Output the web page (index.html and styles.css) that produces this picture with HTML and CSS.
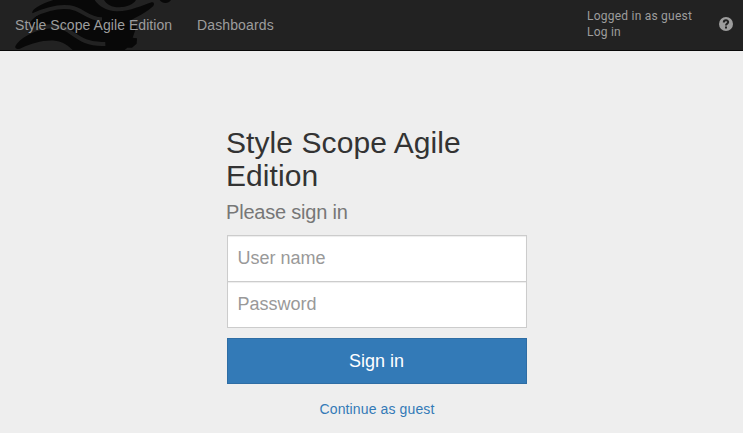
FILE: index.html
```html
<!DOCTYPE html>
<html lang="en">
<head>
<meta charset="utf-8">
<title>Style Scope Agile Edition</title>
<link rel="stylesheet" href="styles.css">
</head>
<body>
<header class="navbar">
  <svg class="navbar-art" width="190" height="50" viewBox="0 0 570 150" aria-hidden="true">
    <path class="ink" d="M97 35C103 22 130 10 160 0H284C296 18 320 33 350 34C390 35 425 16 455 7C462 6 464 12 460 18C440 37 410 51 386 64L410 78L398 113L411 115L410 131L396 143H382L374 150H218C205 138 190 124 165 122C130 119 95 130 66 143C56 149 44 148 46 139C55 122 72 112 90 102L112 78C100 80 84 80 90 68C98 55 115 44 132 34C120 35 110 39 101 40C97 40 96 38 97 35Z"/>
    <path class="ink" d="M312 0H408C399 14 382 21 357 22C335 22 320 13 312 0ZM479 0H513C506 12 486 11 479 0Z"/>
    <path class="wave" d="M98 46C137 28 174 17 209 22C250 28 259 56 306 58M84 97C128 77 173 71 205 92C237 114 260 135 316 132"/>
  </svg>
  <a class="brand">Style Scope Agile Edition</a>
  <nav><a>Dashboards</a></nav>
  <div class="account"><span>Logged in as guest</span><a>Log in</a></div>
  <svg class="help" width="14" height="14" viewBox="0 0 14 14" role="img" aria-label="Help">
    <circle cx="7" cy="7" r="7"/>
    <path d="M4.8 5.5C4.8 2.7 9.2 2.7 9.2 5.1C9.2 6.7 7 6.5 7 8.5"/>
    <path d="M7 9.6V11.5"/>
  </svg>
</header>
<main class="signin">
  <h1>Style Scope Agile Edition</h1>
  <h2>Please sign in</h2>
  <form>
    <input type="text" placeholder="User name" aria-label="User name">
    <input type="password" placeholder="Password" aria-label="Password">
    <button type="button">Sign in</button>
  </form>
  <a class="guest">Continue as guest</a>
</main>
</body>
</html>
```
FILE: styles.css
```css
* { box-sizing: border-box; }
body {
  margin: 0;
  background: #eee;
  color: #333;
  font: 14px/20px "Liberation Sans", Arial, sans-serif;
}
.navbar {
  position: relative;
  display: flex;
  align-items: center;
  height: 51px;
  padding: 0 10px 2px 15px;
  background: #222;
  border-bottom: 1px solid #080808;
  color: #9d9d9d;
}
.navbar-art { position: absolute; left: 0; top: 0; }
.ink { fill: #080808; }
.wave { fill: none; stroke: #222; stroke-width: 12; }
.brand, nav { padding-top: 2px; letter-spacing: 0.06px; }
.brand { position: relative; width: 182px; white-space: nowrap; }
nav { letter-spacing: 0.13px; }
.account {
  display: flex;
  flex-direction: column;
  width: 132px;
  margin-left: auto;
  font: 12px/16px Roboto, sans-serif;
  letter-spacing: 0.23px;
}
.help { fill: #9d9d9d; }
.help path { fill: none; stroke: #222; stroke-width: 2; }
.signin {
  width: 300px;
  margin: 75px 0 0 227px;
}
h1, h2 { margin: 0; font-weight: 400; }
h1 { margin-left: -1px; font-size: 30px; line-height: 33px; letter-spacing: 0.08px; }
h2 { margin: 9px 0 12px -1px; font-size: 20px; line-height: 22px; letter-spacing: -0.2px; color: #777; }
form { display: flex; flex-direction: column; }
input {
  height: 47px;
  padding: 10px 9.5px;
  border: 1px solid #ccc;
  border-radius: 0;
  background: #fff;
  box-shadow: inset 0 1px 1px rgba(0, 0, 0, .075);
  font: 18px/24px "Liberation Sans", Arial, sans-serif;
}
input + input { margin-top: -1px; }
input::placeholder { color: #999; opacity: 1; }
button {
  height: 46px;
  margin-top: 10px;
  padding: 0 1px 0 0;
  border: 1px solid #2e6da4;
  background: #337ab7;
  color: #fff;
  font: 18px/24px "Liberation Sans", Arial, sans-serif;
}
.guest { display: block; margin-top: 15px; color: #337ab7; text-align: center; letter-spacing: 0.12px; }
```
